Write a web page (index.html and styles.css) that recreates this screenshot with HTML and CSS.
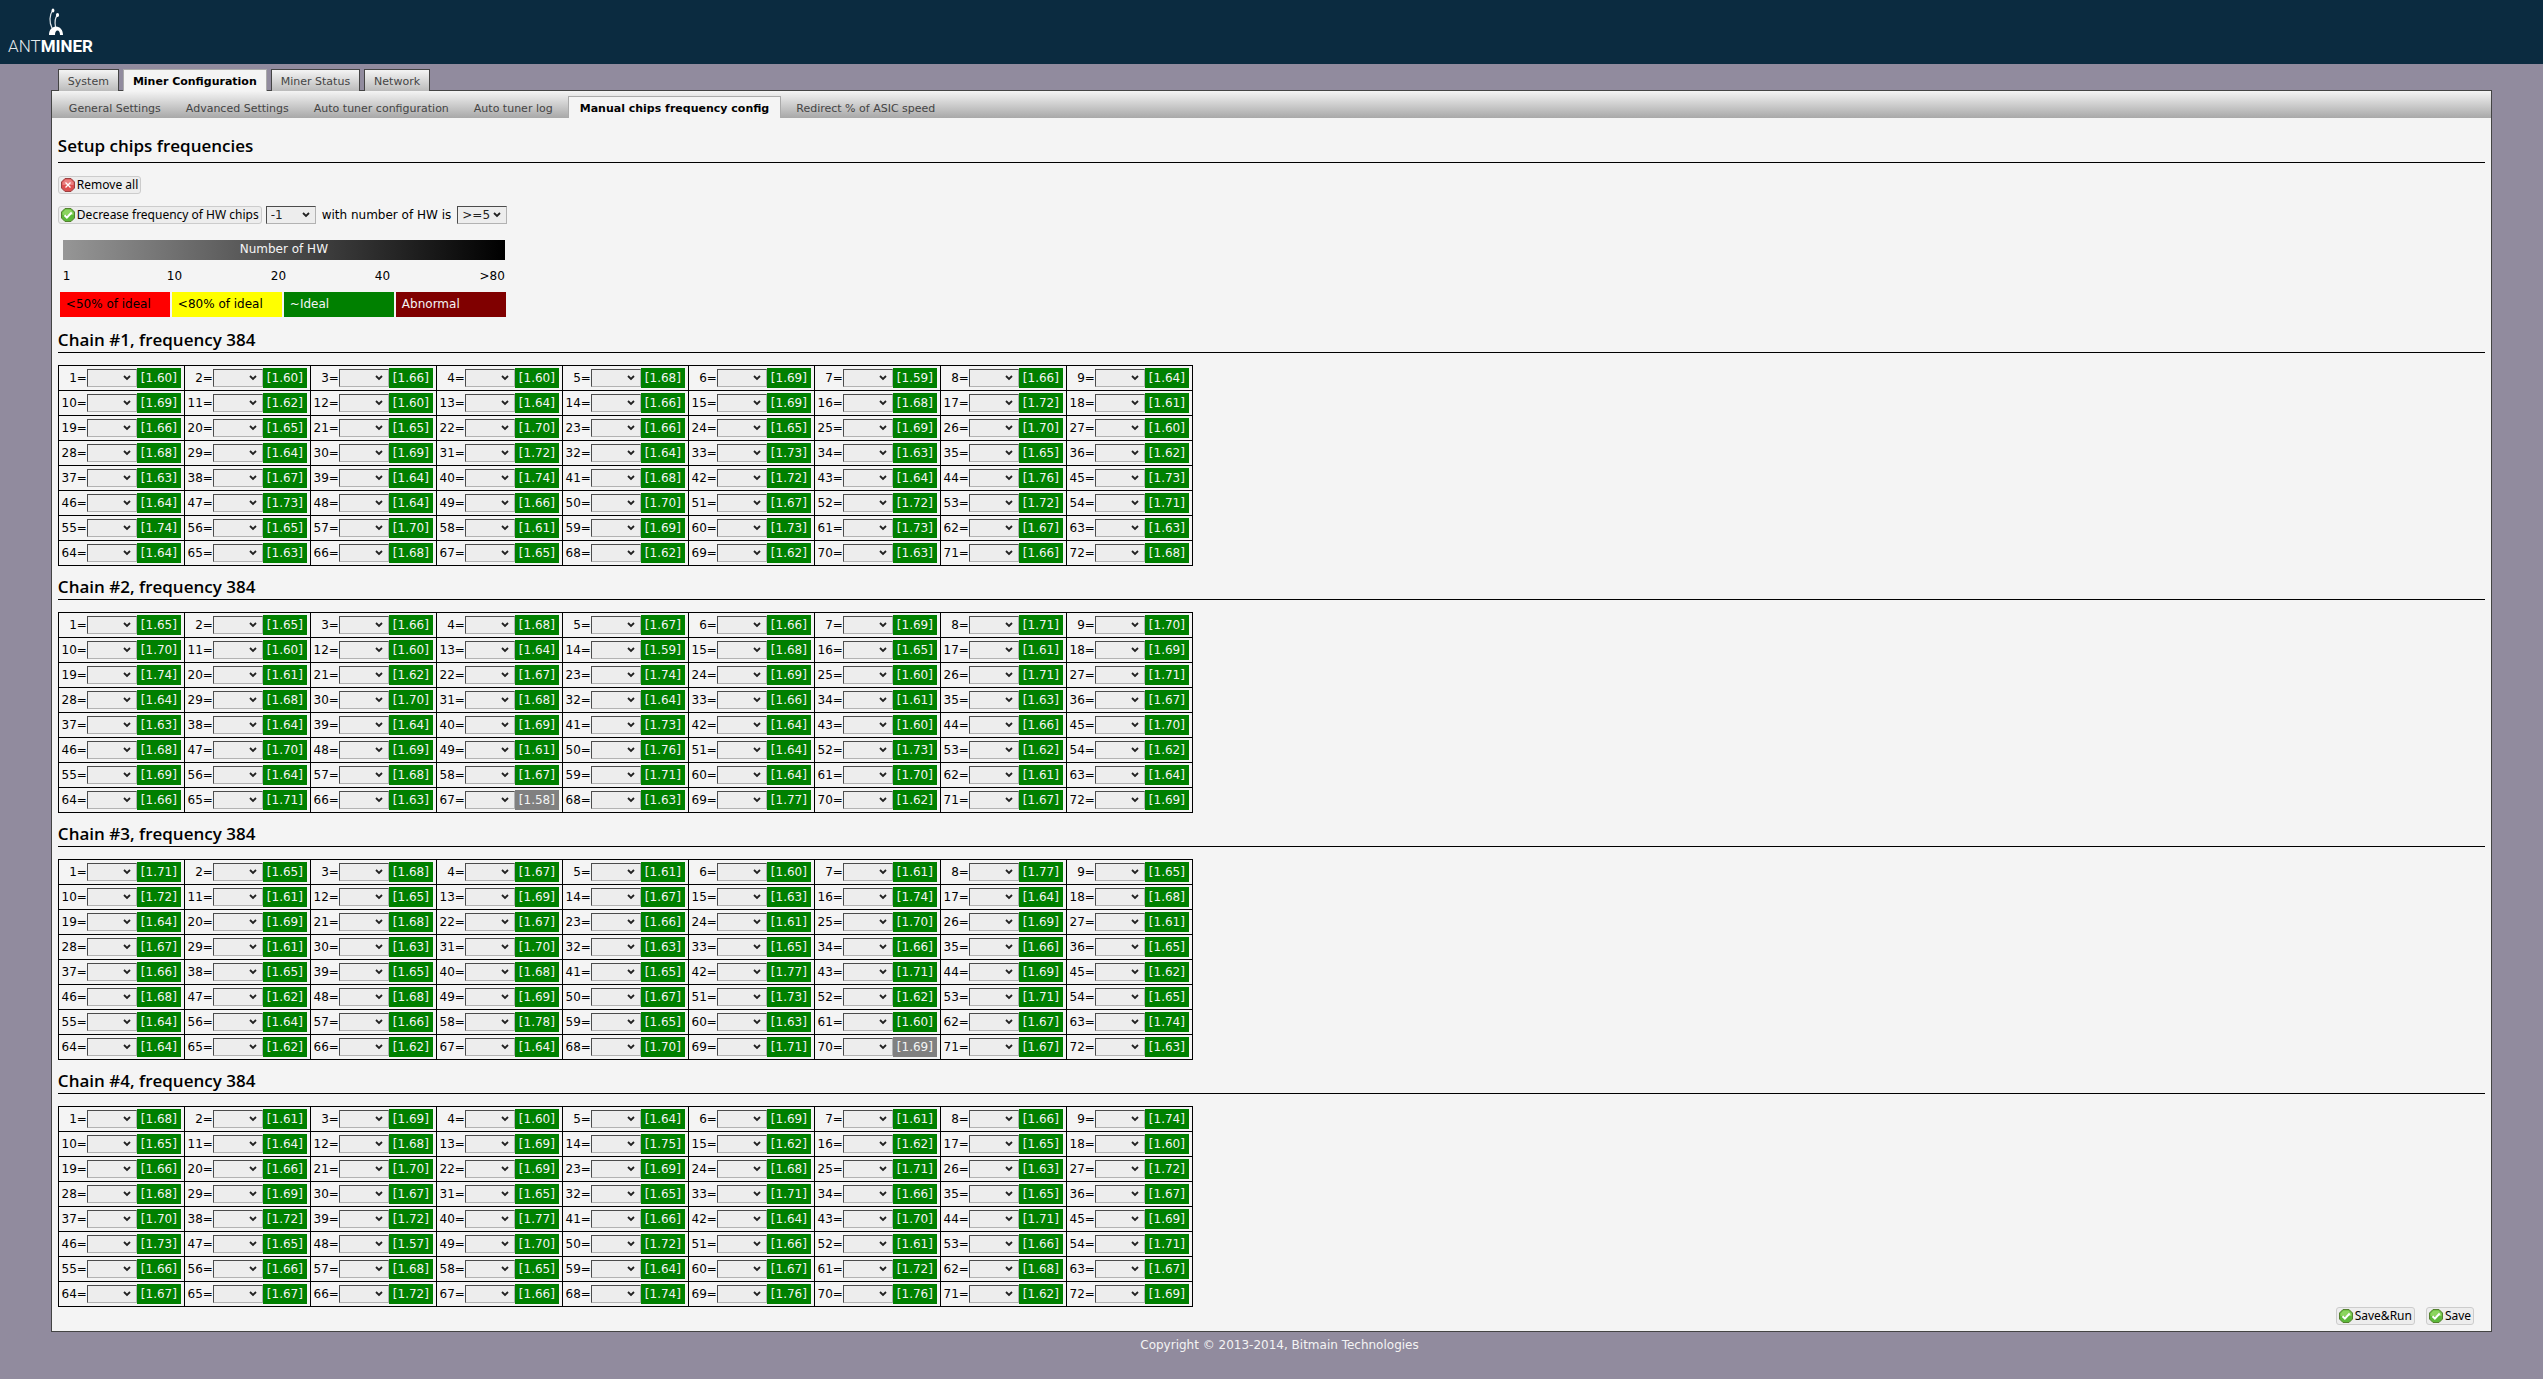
FILE: index.html
```html
<!DOCTYPE html>
<html lang="en">
<head>
<meta charset="utf-8">
<title>AntMiner - Manual chips frequency config</title>
<link rel="stylesheet" href="styles.css">
</head>
<body>
<svg class="sprite" aria-hidden="true">
  <symbol id="icon-ok" viewBox="0 0 14 14">
    <path d="M4 .5h6L13.500 4v6L10 13.500H4L.5 10V4z" fill="#5cb83a" stroke="#55802f"/>
    <path d="M4.500 1.500h5l3 3V7h-11V4.500z" fill="#8bd45f"/>
    <path d="M3.500 7.200l2.400 2.300 4.800-5" fill="none" stroke="#fff" stroke-width="2"/>
  </symbol>
  <symbol id="icon-remove" viewBox="0 0 14 14">
    <path d="M4 .5h6L13.500 4v6L10 13.500H4L.5 10V4z" fill="#dc5050" stroke="#9a4040"/>
    <path d="M4.500 1.500h5l3 3V7h-11V4.500z" fill="#ea8080"/>
    <path d="M4.500 4.500l5 5M9.500 4.500l-5 5" fill="none" stroke="#fff" stroke-width="1.300"/>
  </symbol>
</svg>

<header class="header">
  <a class="logo" href="#">
    <svg class="logo-ant" viewBox="0 0 16 28" aria-hidden="true">
      <path d="M4 20C1 14 1.500 7 4.500 2.500M7.500 19C6.500 14 7 10 9.500 7" fill="none" stroke="#dfe5e9" stroke-width="1.200"/>
      <ellipse cx="5" cy="2.500" rx="1.400" ry="2" fill="#fff"/>
      <ellipse cx="9.500" cy="7" rx="1.600" ry="2" fill="#fff"/>
      <path d="M1 27C1 22 4 18.500 8 18.500S15 22 15 27h-3c0-3-1-4.500-2.500-4.500S7 24 7 27z" fill="#fff"/>
    </svg>
    <span class="logo-text">ANT<b>MINER</b></span>
  </a>
</header>

<div class="page">
  <nav class="tabs">
    <a href="#">System</a>
    <a href="#" class="active">Miner Configuration</a>
    <a href="#">Miner Status</a>
    <a href="#">Network</a>
  </nav>
  <div class="panel">
    <nav class="subtabs">
      <a href="#">General Settings</a>
      <a href="#">Advanced Settings</a>
      <a href="#">Auto tuner configuration</a>
      <a href="#">Auto tuner log</a>
      <a href="#" class="active">Manual chips frequency config</a>
      <a href="#">Redirect % of ASIC speed</a>
    </nav>
    <main class="content">
      <h2 class="title">Setup chips frequencies</h2>
      <div class="actions">
        <button type="button" class="btn"><svg class="icon"><use href="#icon-remove"/></svg>Remove all</button>
      </div>
      <div class="actions">
        <button type="button" class="btn"><svg class="icon"><use href="#icon-ok"/></svg>Decrease frequency of HW chips</button>
        <select class="select" aria-label="Frequency step"><option>-1</option></select>
        <label for="hw-count">with number of HW is</label>
        <select class="select" id="hw-count"><option>&gt;=5</option></select>
      </div>
      <div class="scale">
        <div class="scale-bar">Number of HW</div>
        <div class="scale-marks"><span>1</span><span>10</span><span>20</span><span>40</span><span>&gt;80</span></div>
      </div>
      <div class="legend">
        <span class="low">&lt;50% of ideal</span>
        <span class="medium">&lt;80% of ideal</span>
        <span class="ideal">~Ideal</span>
        <span class="abnormal">Abnormal</span>
      </div>
      <div id="chains"></div>
      <div class="form-actions">
        <button type="submit" class="btn"><svg class="icon"><use href="#icon-ok"/></svg>Save&amp;Run</button>
        <button type="submit" class="btn"><svg class="icon"><use href="#icon-ok"/></svg>Save</button>
      </div>
    </main>
  </div>
</div>
<footer class="footer">Copyright © 2013-2014, Bitmain Technologies</footer>
<script src="script.js"></script>
</body>
</html>
```

FILE: styles.css
```css
* {
  box-sizing: border-box;
}

body {
  margin: 0;
  background: #918b9e;
  color: #000;
  font: 12px/16px Verdana, "DejaVu Sans", sans-serif;
}

.sprite {
  display: none;
}

.header {
  height: 64px;
  padding: 8px;
  background: #0b2b40;
}

.logo {
  display: inline-flex;
  flex-direction: column;
  color: #fff;
  text-decoration: none;
}

.logo-ant {
  width: 16px;
  height: 28px;
  margin-left: 40px;
}

.logo-text {
  color: #e4e9ec;
  font: 300 17px/20px Roboto, sans-serif;
}

.logo-text b {
  color: #fff;
  font-weight: bold;
}

.page {
  margin: 5px 2% 0;
}

.tabs {
  position: relative;
  display: flex;
  gap: 4px;
  margin-bottom: -1px;
  padding-left: 7px;
}

.tabs a,
.subtabs a {
  height: 22px;
  padding: 4px 9px 0;
  border: 1px solid #444;
  border-bottom: 0;
  color: #444;
  font-size: 11px;
  text-decoration: none;
}

.tabs a {
  background: linear-gradient(#f4f4f4, #bbb);
}

.tabs .active,
.subtabs .active {
  border-color: #aaa;
  background: #f4f4f4;
  color: #000;
  font-weight: bold;
}

.panel {
  border: 1px solid #444;
  background: #f4f4f4;
}

.subtabs {
  display: flex;
  gap: 5px;
  padding: 5px 7px 0;
  background: linear-gradient(#f4f4f4, #a8a8a8);
}

.subtabs a {
  border-color: transparent;
}

.subtabs .active {
  padding: 4px 11px 0;
}

.content {
  padding: 0 6px 6px;
}

h2 {
  margin: 0 0 12px;
  padding-bottom: 1px;
  border-bottom: 1px solid #000;
  font: 600 17px/22px "Trebuchet MS", "Open Sans", sans-serif;
}

.title {
  margin: 17px 0 13px;
  padding-bottom: 5px;
}

.actions {
  display: flex;
  align-items: center;
  gap: 4px;
  margin-bottom: 12px;
}

.actions label {
  padding: 0 2px;
}

.btn {
  display: inline-flex;
  align-items: center;
  gap: 2px;
  height: 18px;
  padding: 0 2px;
  border: 1px solid #ccc;
  border-radius: 3px;
  background: #ededed;
  color: #000;
  font: 12px/16px Tahoma, "Noto Sans", sans-serif;
}

.icon {
  width: 14px;
  height: 14px;
}

.select {
  appearance: none;
  flex: none;
  width: 50px;
  height: 18px;
  margin: 0;
  padding: 0 4px;
  border: 1px solid;
  border-color: #4c4c4c #b2b2b2 #b2b2b2 #4c4c4c;
  border-radius: 0;
  background: #ededed url("data:image/svg+xml,%3Csvg xmlns='http://www.w3.org/2000/svg' width='8' height='6'%3E%3Cpath d='M1 1l3 3 3-3' fill='none' stroke='%23222' stroke-width='1.800'/%3E%3C/svg%3E") no-repeat right 5px center;
  color: #222;
  font: 12px/16px Verdana, "DejaVu Sans", sans-serif;
}

.scale {
  width: 442px;
  margin: 16px 0 0 5px;
}

.scale-bar {
  height: 20px;
  background: linear-gradient(to right, #969696, #000);
  color: #f4f4f4;
  line-height: 18px;
  text-align: center;
}

.scale-marks {
  display: grid;
  grid-template-columns: repeat(4, 104px) auto;
  padding: 8px 0;
}

.scale-marks span:last-child {
  text-align: right;
}

.legend {
  display: flex;
  gap: 2px;
  margin: 0 0 12px 2px;
}

.legend span {
  width: 110px;
  padding: 4px 6px 5px;
  color: #f4f4f4;
}

.legend .low {
  background: #f00;
  color: #000;
}

.legend .medium {
  background: #ff0;
  color: #000;
}

.legend .ideal {
  background: #008000;
}

.legend .abnormal {
  background: #800000;
}

.chips {
  margin-bottom: 10px;
  border-collapse: collapse;
}

.chips td {
  height: 25px;
  padding: 0;
  border: 1px solid #000;
}

.chip {
  display: flex;
  align-items: center;
  width: 125px;
  padding-right: 3px;
}

.chip label {
  flex: 1;
  text-align: right;
}

.rate {
  flex: none;
  width: 44px;
  height: 20px;
  background: #008000;
  color: #f4f4f4;
  line-height: 20px;
  text-align: center;
}

.rate.hw {
  background: #808080;
}

.form-actions {
  display: flex;
  justify-content: flex-end;
  gap: 11px;
  margin-top: -10px;
  padding-right: 11px;
}

.footer {
  padding: 5px 0 9px 16px;
  color: #f4f4f4;
  text-align: center;
}
```

FILE: script.js
```js
// Hash rate ratio of every chip, in hundredths, nine chips to a row.
// A trailing "h" marks a chip that reported hardware errors.
const chains = [
  `160 160 166 160 168 169 159 166 164
   169 162 160 164 166 169 168 172 161
   166 165 165 170 166 165 169 170 160
   168 164 169 172 164 173 163 165 162
   163 167 164 174 168 172 164 176 173
   164 173 164 166 170 167 172 172 171
   174 165 170 161 169 173 173 167 163
   164 163 168 165 162 162 163 166 168`,
  `165 165 166 168 167 166 169 171 170
   170 160 160 164 159 168 165 161 169
   174 161 162 167 174 169 160 171 171
   164 168 170 168 164 166 161 163 167
   163 164 164 169 173 164 160 166 170
   168 170 169 161 176 164 173 162 162
   169 164 168 167 171 164 170 161 164
   166 171 163 158h 163 177 162 167 169`,
  `171 165 168 167 161 160 161 177 165
   172 161 165 169 167 163 174 164 168
   164 169 168 167 166 161 170 169 161
   167 161 163 170 163 165 166 166 165
   166 165 165 168 165 177 171 169 162
   168 162 168 169 167 173 162 171 165
   164 164 166 178 165 163 160 167 174
   164 162 162 164 170 171 169h 167 163`,
  `168 161 169 160 164 169 161 166 174
   165 164 168 169 175 162 162 165 160
   166 166 170 169 169 168 171 163 172
   168 169 167 165 165 171 166 165 167
   170 172 172 177 166 164 170 171 169
   173 165 157 170 172 166 161 166 171
   166 166 168 165 164 167 172 168 167
   167 167 172 166 174 176 176 162 169`
];

document.getElementById("chains").innerHTML = chains.map((data, c) => {
  const rows = data.split("\n").map((line, r) => {
    const cells = line.trim().split(" ").map((value, i) => {
      const chip = r * 9 + i + 1;
      const id = `chip-${c + 1}-${chip}`;
      const rate = (parseInt(value, 10) / 100).toFixed(2);
      const state = value.endsWith("h") ? " hw" : "";
      return `<td><div class="chip"><label for="${id}">${chip}=</label>` +
        `<select class="select" id="${id}"><option></option></select>` +
        `<span class="rate${state}">[${rate}]</span></div></td>`;
    });
    return `<tr>${cells.join("")}</tr>`;
  });
  return `<section><h2>Chain #${c + 1}, frequency 384</h2>` +
    `<table class="chips"><tbody>${rows.join("")}</tbody></table></section>`;
}).join("");
```
